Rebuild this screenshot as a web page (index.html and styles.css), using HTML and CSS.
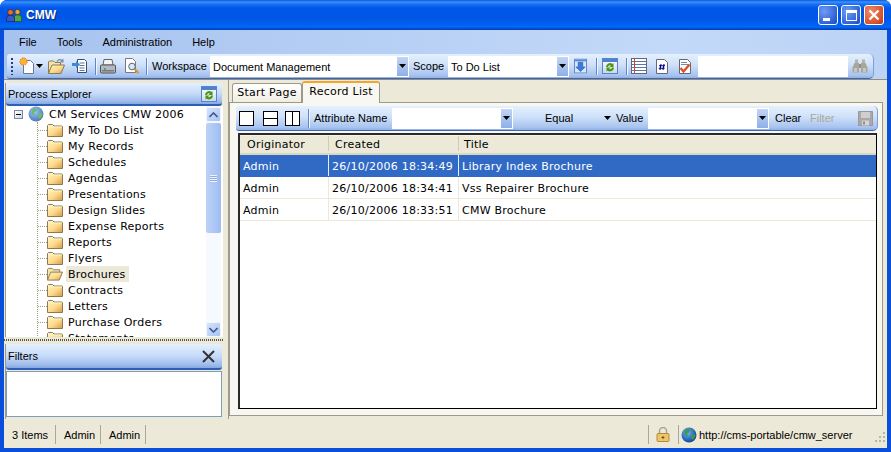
FILE: index.html
```html
<!DOCTYPE html>
<html lang="en">
<head>
<meta charset="utf-8">
<title>CMW</title>
<link rel="stylesheet" href="styles.css">
</head>
<body>
<svg class="defs" width="0" height="0" aria-hidden="true">
  <defs>
    <linearGradient id="fold" x1="0" y1="0" x2="1" y2="1"><stop offset="0" stop-color="#fff6c8"/><stop offset=".55" stop-color="#fcd98a"/><stop offset="1" stop-color="#d99a45"/></linearGradient>
    <radialGradient id="globe" cx=".4" cy=".35" r=".7"><stop offset="0" stop-color="#7fb6ee"/><stop offset=".6" stop-color="#2a6fc4"/><stop offset="1" stop-color="#123f8c"/></radialGradient>
    <linearGradient id="btnrefresh" x1="0" y1="0" x2="0" y2="1"><stop offset="0" stop-color="#ffffff"/><stop offset="1" stop-color="#c9d8ee"/></linearGradient>
    <symbol id="folder" viewBox="0 0 16 14">
      <path d="M.5 13.5V2.5l1-1h4l1.500 1.500h8l.5.5v10z" fill="url(#fold)" stroke="#8a7a58"/>
      <path d="M1 4h14" stroke="#fff4c4"/>
    </symbol>
    <symbol id="folderopen" viewBox="0 0 17 14">
      <path d="M.5 13.500V2l1-1h4L7 2.500h6.500V5" fill="#f5e3a8" stroke="#8a7a58"/>
      <path d="M.5 13.500L4 5h12.500l-3.500 8.500z" fill="url(#fold)" stroke="#8a7a58"/>
    </symbol>
    <symbol id="globeicon" viewBox="0 0 16 16">
      <circle cx="8" cy="8" r="7.500" fill="url(#globe)"/>
      <path d="M4 3.500l3-1.500 2 1-1 2.500-2 1 1 2-1.500 1-2-2.500zM10 8l3.500-1 1 2-2.500 4-2-1.500zM10 2.500l2.500 1-1 1.500z" fill="#3d9a46"/>
    </symbol>
    <symbol id="refresh" viewBox="0 0 16 16">
      <rect x=".5" y=".5" width="15" height="15" fill="url(#btnrefresh)" stroke="#5a84c8"/>
      <rect x="1" y="1" width="14" height="3" fill="#4f81d0"/>
      <path d="M4 9a4 4 0 0 1 6.500-3l1-1v4H7.500l1.500-1.500A2.200 2.200 0 0 0 6 9z" fill="#4a9410"/>
      <path d="M12 9.500a4 4 0 0 1-6.500 3l-1 1v-4h4L7 11a2.200 2.200 0 0 0 3-1.500z" fill="#4a9410"/>
    </symbol>
    <symbol id="downbtn" viewBox="0 0 14 16">
      <rect x=".5" y=".5" width="13" height="15" fill="#dbe6f7" stroke="#5a84c8"/>
      <rect x="1" y="1" width="12" height="2" fill="#5a8ad6"/>
      <path d="M4.500 4h5v5H12l-5 5-5-5h2.500z" fill="#3c7ae0" stroke="#1f55b0" stroke-width=".6"/>
    </symbol>
    <symbol id="combodown" viewBox="0 0 7 4"><path d="M0 0h7L3.500 4z" fill="#000"/></symbol>
  </defs>
</svg>

<div class="window">
  <header class="titlebar">
    <svg class="appicon" viewBox="0 0 16 13" width="16" height="13" aria-hidden="true">
      <circle cx="11.500" cy="3" r="2.600" fill="#eea73a" stroke="#4a2c10" stroke-width=".7"/>
      <path d="M8 12.500V8.500a3.500 2.500 0 0 1 7.500 0v4z" fill="#4fa84a" stroke="#1d4a22" stroke-width=".7"/>
      <circle cx="4.500" cy="3.300" r="2.800" fill="#e8702e" stroke="#4a1c10" stroke-width=".7"/>
      <path d="M.5 12.500V9a4 2.800 0 0 1 8 0v3.500z" fill="#3558c4" stroke="#14246a" stroke-width=".7"/>
    </svg>
    <span class="apptitle">CMW</span>
    <div class="winbtns">
      <span class="winbtn"><i class="gmin"></i></span>
      <span class="winbtn"><i class="gmax"></i></span>
      <span class="winbtn close">
        <svg viewBox="0 0 12 12" width="12" height="12" aria-hidden="true"><path d="M1.500 1.500l9 9M10.500 1.500l-9 9" stroke="#fff" stroke-width="2.400"/></svg>
      </span>
    </div>
  </header>

  <div class="client">
    <nav class="menubar">
      <span class="menu">File</span><span class="menu">Tools</span><span class="menu">Administration</span><span class="menu">Help</span>
    </nav>

    <div class="toolband">
      <div class="toolbar">
        <span class="grip"></span>
        <svg class="ic new" viewBox="0 0 16 18" width="16" height="18" aria-hidden="true">
          <path d="M4.500 3.500h7l3 3v10h-10z" fill="#fbfcfe" stroke="#6b7a90"/>
          <circle cx="4.500" cy="4.500" r="3.600" fill="#f9b233" stroke="#e0701a" stroke-dasharray="1.500 1"/>
        </svg>
        <svg class="ddarrow" width="7" height="4" aria-hidden="true"><use href="#combodown"/></svg>
        <svg class="ic open" viewBox="0 0 17 16" width="17" height="16" aria-hidden="true">
          <path d="M.5 15.500V4l1-1h4L7 4.500h5.500V7" fill="#f5e3a8" stroke="#8a7a58"/>
          <path d="M.5 15.500L4 7h12.500L13 15.500z" fill="url(#fold)" stroke="#8a7a58"/>
          <path d="M9 3.500C10.500 1.500 12.500 1 14 2.500" fill="none" stroke="#7f8aa0" stroke-width="1.300"/>
          <path d="M15.500 .5v4h-4z" fill="#7f8aa0"/>
        </svg>
        <svg class="ic save" viewBox="0 0 16 16" width="16" height="16" aria-hidden="true">
          <path d="M5.500 1.500h7l2 2v11h-9z" fill="#fff" stroke="#33507c"/>
          <path d="M7.500 5h5M7.500 7.500h5M7.500 10h5M7.500 12.500h5" stroke="#5a7094"/>
          <path d="M0 5h4V3l4 3.500-4 3.500V8H0z" fill="#3c86dc"/>
        </svg>
        <span class="sep s1"></span>
        <svg class="ic print" viewBox="0 0 16 15" width="16" height="15" aria-hidden="true">
          <path d="M4 .5h8l1 5.500H3z" fill="#f4f4f4" stroke="#666"/>
          <rect x=".5" y="6" width="15" height="8" rx="1" fill="#b5b8c4" stroke="#555"/>
          <rect x="2" y="11" width="12" height="1.500" fill="#777"/>
          <rect x="4" y="9" width="2" height="2" fill="#2cc24a"/>
        </svg>
        <svg class="ic preview" viewBox="0 0 16 16" width="16" height="16" aria-hidden="true">
          <path d="M1.500.5h7l3 3v11h-10z" fill="#fff" stroke="#778"/>
          <circle cx="8" cy="8.500" r="3.300" fill="#d7e8f7" stroke="#666"/>
          <path d="M10.500 11l4 4" stroke="#d9902a" stroke-width="2.200"/>
        </svg>
        <span class="sep s2"></span>
        <span class="tlabel wslabel">Workspace</span>
        <div class="combo wscombo"><span class="comboval">Document Management</span><span class="combobtn"><svg width="7" height="4" aria-hidden="true"><use href="#combodown"/></svg></span></div>
        <span class="tlabel scopelabel">Scope</span>
        <div class="combo scopecombo"><span class="comboval">To Do List</span><span class="combobtn"><svg width="7" height="4" aria-hidden="true"><use href="#combodown"/></svg></span></div>
        <svg class="ic down" viewBox="0 0 14 16" width="13" height="16" aria-hidden="true"><use href="#downbtn"/></svg>
        <span class="sep s3"></span>
        <svg class="ic ref" width="16" height="16" aria-hidden="true"><use href="#refresh"/></svg>
        <span class="sep s4"></span>
        <svg class="ic list" viewBox="0 0 16 16" width="16" height="16" aria-hidden="true">
          <rect x=".5" y=".5" width="15" height="15" fill="#fff" stroke="#667"/>
          <path d="M1 3.500h14M1 6.500h14M1 9.500h14M1 12.500h14" stroke="#5577aa"/>
          <path d="M3.500 1v14" stroke="#d8402a"/>
        </svg>
        <svg class="ic hash" viewBox="0 0 12 15" width="12" height="15" aria-hidden="true">
          <path d="M.5 .5h8l3 3v11H.5z" fill="#fff" stroke="#667"/>
          <path d="M5 5l-1 6M8 5l-1 6M3 6.800h6M2.700 9.200h6" stroke="#000090" stroke-width="1.100"/>
        </svg>
        <svg class="ic check" viewBox="0 0 12 15" width="12" height="15" aria-hidden="true">
          <path d="M.5 .5h8l3 3v11H.5z" fill="#fff" stroke="#667"/>
          <path d="M2 3.500h6M2 5.500h7" stroke="#7a8aa8"/>
          <path d="M1.500 9l3 3.500 6-7" stroke="#e04a24" stroke-width="2.200" fill="none"/>
        </svg>
        <div class="searchbox"></div>
        <svg class="ic binoc" viewBox="0 0 16 14" width="16" height="14" aria-hidden="true">
          <path d="M3 .5h3v3.500H3zM10 .5h3v3.500h-3z" fill="#b4b4aa"/>
          <path d="M2.500 4h4.500v9.500H.5v-5zM9 4h4.500l2 4.500v5H9z" fill="#a6a69c"/>
          <path d="M7 5h2v4H7z" fill="#8f8f86"/>
          <path d="M2 9h3v4H2zM11 9h3v4h-3z" fill="#c6c6bc"/>
        </svg>
      </div>
    </div>

    <main class="main">
      <aside class="leftpane">
        <section class="explorer">
          <div class="panehead">
            <span class="panetitle">Process Explorer</span>
            <svg class="paneicon" width="16" height="16" aria-hidden="true"><use href="#refresh"/></svg>
          </div>
          <div class="treewrap">
            <div class="tree">
              <div class="troot">
                <span class="expander"></span>
                <svg class="rootglobe" width="16" height="16" aria-hidden="true"><use href="#globeicon"/></svg>
                <span class="tlabeltree">CM Services CMW 2006</span>
              </div>
              <ul class="tlist">
                <li class="titem"><svg class="folder" width="16" height="14" aria-hidden="true"><use href="#folder"/></svg><span class="tname">My To Do List</span></li>
                <li class="titem"><svg class="folder" width="16" height="14" aria-hidden="true"><use href="#folder"/></svg><span class="tname">My Records</span></li>
                <li class="titem"><svg class="folder" width="16" height="14" aria-hidden="true"><use href="#folder"/></svg><span class="tname">Schedules</span></li>
                <li class="titem"><svg class="folder" width="16" height="14" aria-hidden="true"><use href="#folder"/></svg><span class="tname">Agendas</span></li>
                <li class="titem"><svg class="folder" width="16" height="14" aria-hidden="true"><use href="#folder"/></svg><span class="tname">Presentations</span></li>
                <li class="titem"><svg class="folder" width="16" height="14" aria-hidden="true"><use href="#folder"/></svg><span class="tname">Design Slides</span></li>
                <li class="titem"><svg class="folder" width="16" height="14" aria-hidden="true"><use href="#folder"/></svg><span class="tname">Expense Reports</span></li>
                <li class="titem"><svg class="folder" width="16" height="14" aria-hidden="true"><use href="#folder"/></svg><span class="tname">Reports</span></li>
                <li class="titem"><svg class="folder" width="16" height="14" aria-hidden="true"><use href="#folder"/></svg><span class="tname">Flyers</span></li>
                <li class="titem"><svg class="folder" width="17" height="14" aria-hidden="true"><use href="#folderopen"/></svg><span class="tname selected">Brochures</span></li>
                <li class="titem"><svg class="folder" width="16" height="14" aria-hidden="true"><use href="#folder"/></svg><span class="tname">Contracts</span></li>
                <li class="titem"><svg class="folder" width="16" height="14" aria-hidden="true"><use href="#folder"/></svg><span class="tname">Letters</span></li>
                <li class="titem"><svg class="folder" width="16" height="14" aria-hidden="true"><use href="#folder"/></svg><span class="tname">Purchase Orders</span></li>
                <li class="titem"><svg class="folder" width="16" height="14" aria-hidden="true"><use href="#folder"/></svg><span class="tname">Statements</span></li>
              </ul>
            </div>
            <div class="scrollbar">
              <span class="sbtn"><svg viewBox="0 0 9 6" width="9" height="6" aria-hidden="true"><path d="M.5 5L4.500 1l4 4" fill="none" stroke="#3c5a96" stroke-width="1.600"/></svg></span>
              <span class="sthumb"><i class="sgrip"></i></span>
              <span class="strack"></span>
              <span class="sbtn"><svg viewBox="0 0 9 6" width="9" height="6" aria-hidden="true"><path d="M.5 1l4 4 4-4" fill="none" stroke="#3c5a96" stroke-width="1.600"/></svg></span>
            </div>
          </div>
        </section>
        <div class="hsplit"></div>
        <section class="filters">
          <div class="panehead filterhead">
            <span class="panetitle">Filters</span>
            <svg class="closex" viewBox="0 0 13 13" width="13" height="13" aria-hidden="true"><path d="M1 1l11 11M12 1L1 12" stroke="#333" stroke-width="2"/></svg>
          </div>
          <div class="filterbox"></div>
        </section>
      </aside>

      <section class="rightpane">
        <div class="tabstrip">
          <span class="tab">Start Page</span>
          <span class="tab active">Record List</span>
        </div>
        <div class="tabpanel">
          <div class="filterbar">
            <svg class="lay l1" viewBox="0 0 15 15" width="15" height="15" aria-hidden="true"><rect x=".5" y=".5" width="14" height="14" fill="#fff" stroke="#000"/></svg>
            <svg class="lay l2" viewBox="0 0 15 15" width="15" height="15" aria-hidden="true"><rect x=".5" y=".5" width="14" height="14" fill="#fff" stroke="#000"/><path d="M0 7.500h15" stroke="#000"/></svg>
            <svg class="lay l3" viewBox="0 0 15 15" width="15" height="15" aria-hidden="true"><rect x=".5" y=".5" width="14" height="14" fill="#fff" stroke="#000"/><path d="M7.500 0v15" stroke="#000"/></svg>
            <span class="sep s5"></span>
            <span class="tlabel attrlabel">Attribute Name</span>
            <div class="combo attrcombo"><span class="comboval"></span><span class="combobtn"><svg width="7" height="4" aria-hidden="true"><use href="#combodown"/></svg></span></div>
            <span class="tlabel equal">Equal</span>
            <svg class="ddarrow eqarrow" width="7" height="4" aria-hidden="true"><use href="#combodown"/></svg>
            <span class="tlabel valuelabel">Value</span>
            <div class="combo valcombo"><span class="comboval"></span><span class="combobtn"><svg width="7" height="4" aria-hidden="true"><use href="#combodown"/></svg></span></div>
            <span class="tlabel clear">Clear</span>
            <span class="tlabel filterlbl">Filter</span>
            <svg class="floppy" viewBox="0 0 15 15" width="15" height="15" aria-hidden="true">
              <path d="M.5.500h14v14H.5z" fill="#a9a9a9" stroke="#989898"/>
              <rect x="3" y="1" width="9" height="6" fill="#cfcfcf"/>
              <rect x="4" y="9.500" width="7" height="5" fill="#d6d6d6"/>
              <rect x="5" y="10.500" width="2" height="3" fill="#8f8f8f"/>
            </svg>
          </div>
          <div class="grid">
            <div class="ghead">
              <span class="gh c1">Originator</span><span class="gh c2">Created</span><span class="gh c3">Title</span>
            </div>
            <div class="grow sel"><span class="gc c1">Admin</span><span class="gc c2">26/10/2006 18:34:49</span><span class="gc c3">Library Index Brochure</span></div>
            <div class="grow"><span class="gc c1">Admin</span><span class="gc c2">26/10/2006 18:34:41</span><span class="gc c3">Vss Repairer Brochure</span></div>
            <div class="grow"><span class="gc c1">Admin</span><span class="gc c2">26/10/2006 18:33:51</span><span class="gc c3">CMW Brochure</span></div>
          </div>
        </div>
      </section>
    </main>

    <footer class="statusbar">
      <span class="st st1">3 Items</span>
      <span class="st st2">Admin</span>
      <span class="st st3">Admin</span>
      <span class="stfill"></span>
      <span class="st stlock">
        <svg viewBox="0 0 14 15" width="14" height="15" aria-hidden="true">
          <path d="M3.500 7V4a3.500 3.500 0 0 1 7 0v3" fill="none" stroke="#a8a498" stroke-width="1.500"/>
          <rect x="1" y="6.500" width="12" height="8" rx="1" fill="#eec56a" stroke="#b58a38"/>
          <path d="M7 9v3M5.500 10.500h3" stroke="#6b5220"/>
        </svg>
      </span>
      <span class="stglobe">
        <svg width="16" height="16" aria-hidden="true"><use href="#globeicon"/></svg>
        <span class="sturl">http://cms-portable/cmw_server</span>
      </span>
      <span class="sizegrip">
        <i></i><i></i><i></i><i></i><i></i><i></i>
      </span>
    </footer>
  </div>
</div>
</body>
</html>
```

FILE: styles.css
```css
* { box-sizing: border-box; }
html, body { margin: 0; padding: 0; background: #fff; }
body { width: 891px; height: 452px; overflow: hidden; font-family: "Liberation Sans", sans-serif; font-size: 11px; color: #000; }
.defs { position: absolute; }
.window { width: 891px; height: 452px; display: flex; flex-direction: column; background: #0a4fdc; border-radius: 7px 7px 0 0; overflow: hidden; }

.titlebar { height: 30px; flex: none; display: flex; align-items: center; padding: 0 7px 0 6px;
  background: linear-gradient(#0a58dc 0, #3a93ff 2px, #1a72f5 4px, #0058e8 8px, #0055e5 18px, #0062f2 25px, #0468f8 27px, #0048c8 29px, #0040b8 30px); }
.appicon { margin-right: 4px; }
.apptitle { color: #fff; font: bold 12px "Liberation Sans", sans-serif; text-shadow: 1px 1px 1px #0a2c80; }
.winbtns { margin-left: auto; display: flex; gap: 3px; }
.winbtn { width: 20px; height: 20px; border: 1px solid #fff; border-radius: 3px; display: flex; align-items: center; justify-content: center; position: relative;
  background: radial-gradient(circle at 30% 30%, #6f9cf4, #2f62d8 70%, #1d45b8); }
.winbtn.close { background: radial-gradient(circle at 30% 30%, #ee8a66, #d9502a 70%, #b83414); }
.gmin { position: absolute; left: 4px; bottom: 3px; width: 7px; height: 3px; background: #fff; }
.gmax { width: 11px; height: 11px; border: 1px solid #fff; border-top-width: 3px; }

.client { flex: 1; min-height: 0; margin: 0 4px 4px; display: flex; flex-direction: column; background: #ece9d8; }
.menubar { height: 24px; flex: none; display: flex; align-items: center; padding: 0 0 0 15px; gap: 20px; background: linear-gradient(90deg, #a6c2ee, #c3d9f9 75%, #bcd3f6); }
.menu { line-height: 16px; }
.toolband { height: 26px; flex: none; padding-left: 3px; padding-right: 13px; background: linear-gradient(90deg, #a6c2ee, #c3d9f9 75%, #bcd3f6); border-bottom: 1px solid #8f8d7e; }
.toolbar, .filterbar { display: flex; align-items: center; height: 25px; border-radius: 3px 5px 5px 3px; background: linear-gradient(#e4f0fe, #cfe1f9 45%, #a6c2ee 90%, #8fb0e6); border-bottom: 1px solid #3b66b8; border-right: 1px solid #7f9fd8; }
.grip { width: 2px; height: 17px; margin-left: 4px; background: repeating-linear-gradient(#1f3f8c 0 2px, transparent 2px 4px); }
.ic { flex: none; }
.new { margin-left: 6px; }
.ddarrow { flex: none; }
.toolbar > .ddarrow { margin-left: 1px; }
.open { margin-left: 5px; }
.save { margin-left: 7px; }
.sep { flex: none; width: 1px; height: 17px; background: #5f86c8; box-shadow: 1px 0 0 #f0f6ff; }
.s1 { margin-left: 7px; }
.print { margin-left: 4px; }
.preview { margin-left: 8px; }
.s2 { margin-left: 6px; }
.tlabel { flex: none; line-height: 16px; white-space: nowrap; }
.wslabel { margin-left: 5px; width: 52px; }
.combo { flex: none; height: 21px; display: flex; background: #fff; }
.comboval { flex: 1; padding-left: 3px; line-height: 23px; white-space: nowrap; overflow: hidden; }
.combobtn { width: 12px; display: flex; align-items: center; justify-content: center; background: linear-gradient(#c2d6f5, #8fb0e6); border: 1px solid #fff; border-left: 0; }
.wscombo { width: 199px; margin-left: 6px; }
.scopelabel { margin-left: 4px; width: 30px; }
.scopecombo { width: 121px; margin-left: 5px; }
.down { margin-left: 5px; }
.s3 { margin-left: 9px; }
.ref { margin-left: 5px; }
.s4 { margin-left: 8px; }
.list { margin-left: 4px; }
.hash { margin-left: 9px; }
.check { margin-left: 11px; }
.searchbox { flex: none; width: 150px; height: 21px; margin-left: 7px; background: #fff; }
.binoc { margin-left: 4px; }

.main { flex: 1; min-height: 0; display: flex; }
.leftpane { width: 219px; flex: none; margin-right: 5px; padding: 3px 0 0 1px; display: flex; flex-direction: column; }
.explorer { height: 254px; flex: none; display: flex; flex-direction: column; border-left: 1px solid #9c9a8c; }
.panehead { height: 23px; flex: none; display: flex; align-items: center; padding: 0 5px 0 2px; margin-right: 1px; border-radius: 2px 2px 3px 3px; background: linear-gradient(#e4f0fe, #c6dbf8 50%, #a0bdec 85%, #86a8e2); border-bottom: 2px solid #2f5fb4; }
.panetitle { line-height: 16px; }
.paneicon { margin-left: auto; }
.treewrap { flex: 1; min-height: 0; display: flex; background: #fff; }
.tree { flex: 1; min-width: 0; overflow: hidden; font-family: "DejaVu Sans", sans-serif; font-size: 11px; letter-spacing: .25px; }
.troot { height: 16px; display: flex; align-items: center; padding-left: 8px; }
.expander { width: 9px; height: 9px; border: 1px solid #7a8aa8; background: linear-gradient(135deg, #fff, #cfd6e4); position: relative; margin-right: 5px; }
.expander::after { content: ""; position: absolute; left: 1px; top: 3px; width: 5px; height: 1px; background: #000; }
.rootglobe { margin-right: 5px; opacity: .72; }
.tlabeltree { padding-top: 1px; }
.tlist { list-style: none; margin: 0 0 0 31px; padding: 0; border-left: 1px dotted #9a9a80; }
.titem { height: 16px; display: flex; align-items: center; white-space: nowrap; }
.titem::before { content: ""; width: 9px; flex: none; border-top: 1px dotted #9a9a80; }
.folder { flex: none; width: 16px; }
.tname { margin-left: 3px; padding: 1px 3px 0 2px; line-height: 15px; height: 16px; }
.tname.selected { background: #ece9d8; }
.scrollbar { width: 15px; flex: none; display: flex; flex-direction: column; margin-right: 2px; background: #f6f9fe; padding-top: 1px; }
.sbtn { height: 15px; flex: none; display: flex; align-items: center; justify-content: center; border: 1px solid #f0f5fe; border-radius: 2px; background: linear-gradient(135deg, #d6e4fb, #a7c2f2); }
.sthumb { height: 110px; margin-top: 1px; flex: none; display: flex; align-items: center; justify-content: center; border-radius: 2px; background: linear-gradient(90deg, #bed2f7, #aac6f4 60%, #9fbcf0); }
.sgrip { width: 7px; height: 7px; background: repeating-linear-gradient(#eef4fe 0 1px, #92aee0 1px 2px); }
.strack { flex: 1; }
.hsplit { height: 7px; flex: none; margin-left: -1px; background: repeating-linear-gradient(90deg, #555 0 1px, #ece9d8 1px 2px) 0 2px / 100% 2px no-repeat; }
.filters { flex: 1; display: flex; flex-direction: column; border-left: 1px solid #9c9a8c; min-height: 0; }
.filterhead { height: 26px; padding-right: 7px; }
.closex { margin-left: auto; }
.filterbox { height: 46px; flex: none; margin-right: 1px; border: 1px solid #7f9db9; background: #fff; margin-top: 1px; }

.rightpane { flex: 1; min-width: 0; display: flex; flex-direction: column; border-left: 1px solid #9c9a8c; }
.tabstrip { height: 22px; flex: none; display: flex; align-items: flex-end; padding-left: 3px; font-family: "DejaVu Sans", sans-serif; font-size: 11px; letter-spacing: .25px; }
.tab { height: 19px; line-height: 18px; border: 1px solid #9c9a8c; border-bottom: 0; border-radius: 3px 3px 0 0; background: linear-gradient(#fff, #f0eee2); width: 70px; text-align: center; white-space: nowrap; }
.tab.active { height: 22px; width: 78px; background: #f8f7f1; border-top: 2px solid #f5a623; line-height: 17px; margin-bottom: -1px; position: relative; padding-bottom: 2px; }
.tabpanel { flex: 1; min-height: 0; margin: 0 4px 3px 0; padding: 3px 4px 6px 6px; display: flex; flex-direction: column; background: #f8f7f1; border: 1px solid #9c9a8c; }
.filterbar { flex: none; padding-left: 3px; }
.lay { flex: none; }
.l2 { margin-left: 9px; }
.l3 { margin-left: 7px; }
.s5 { margin-left: 8px; height: 19px; }
.attrlabel { margin-left: 5px; width: 72px; }
.attrcombo { width: 121px; margin-left: 6px; }
.equal { margin-left: 32px; width: 27px; }
.eqarrow { margin-left: 32px; }
.valuelabel { margin-left: 5px; width: 27px; }
.valcombo { width: 121px; margin-left: 5px; }
.clear { margin-left: 6px; width: 25px; }
.filterlbl { margin-left: 10px; width: 24px; color: #a8a89c; }
.floppy { margin-left: 24px; flex: none; }
.grid { flex: 1; min-height: 0; margin: 2px 1px 0 2px; border-style: solid; border-width: 2px 1px 1px 2px; border-color: #2a2a2a #000 #000 #2a2a2a; background: #fff; font-family: "DejaVu Sans", sans-serif; font-size: 11px; letter-spacing: .25px; }
.ghead { height: 20px; display: flex; background: #ece9d8; box-shadow: inset 0 1px 0 #f6f4ea, inset 0 -2px 0 #d9d6c2; }
.gh { padding-left: 6px; line-height: 17px; border-right: 1px solid #cfcbb4; height: 15px; margin-top: 1px; }
.c1 { width: 89px; flex: none; }
.c2 { width: 130px; flex: none; }
.c3 { flex: 1; }
.gh.c1 { padding-left: 7px; }
.gh.c3 { border-right: 0; padding-left: 5px; }
.grow { height: 22px; display: flex; border-bottom: 1px solid #ece9d8; }
.gc { padding: 1px 0 0 3px; line-height: 21px; border-right: 1px solid #ece9d8; white-space: nowrap; }
.gc.c3 { border-right: 0; }
.grow.sel { background: #316ac5; color: #fff; border-bottom-color: #316ac5; }
.grow.sel .gc { border-right-color: #e8eefa; }
.grow.sel .gc.c3 { border-right: 0; }

.statusbar { height: 29px; flex: none; display: flex; align-items: center; padding: 2px 0 0 8px; }
.st { display: flex; align-items: center; height: 19px; flex: none; border-right: 1px solid #aca899; }
.st1 { width: 44px; margin-right: 8px; }
.st2 { width: 37px; margin-right: 8px; }
.st3 { width: 37px; }
.stfill { flex: 1; height: 19px; }
.stlock { width: 31px; padding-left: 7px; margin-right: 2px; border-left: 1px solid #aca899; }
.stglobe { display: flex; align-items: center; gap: 2px; width: 192px; flex: none; }
.sizegrip { width: 12px; height: 12px; margin: 6px 2px 0 0; display: grid; grid-template-columns: repeat(3, 2px); grid-template-rows: repeat(3, 2px); gap: 2px; justify-content: end; flex: none; }
.sizegrip i { background: #b8b5a3; }
.sizegrip i:nth-child(1) { grid-column: 3; grid-row: 1; }
.sizegrip i:nth-child(2) { grid-column: 2; grid-row: 2; }
.sizegrip i:nth-child(3) { grid-column: 3; grid-row: 2; }
.sizegrip i:nth-child(4) { grid-column: 1; grid-row: 3; }
.sizegrip i:nth-child(5) { grid-column: 2; grid-row: 3; }
.sizegrip i:nth-child(6) { grid-column: 3; grid-row: 3; }
```
